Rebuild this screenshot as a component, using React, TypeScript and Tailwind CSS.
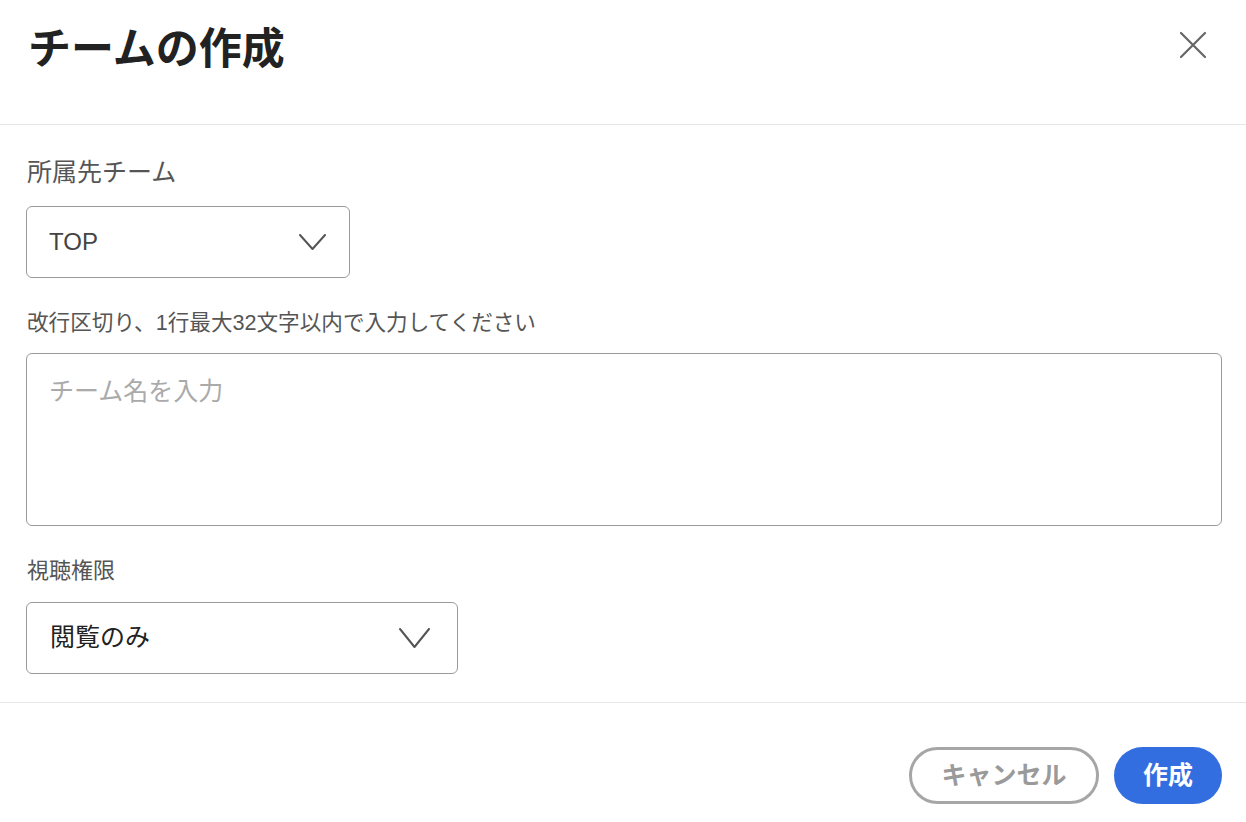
import React from "react";

const FONT = { fontFamily: '"Liberation Sans", "Noto Sans CJK JP", sans-serif' };

function Chevron({ w, h }: { w: number; h: number }) {
  return (
    <svg width={w} height={h} viewBox={`0 0 ${w} ${h}`} fill="none">
      <path d={`M1 1 L${w / 2} ${h - 1} L${w - 1} 1`} stroke="#555" strokeWidth="2" strokeLinecap="round" strokeLinejoin="round" />
    </svg>
  );
}

export default function App() {
  return (
    <div className="w-[1246px] h-[822px] bg-white flex flex-col overflow-hidden" style={FONT}>
      <header className="h-[125px] border-b border-[#e6e6e6] flex items-start justify-between pl-[28px] pr-[38px] pt-[17px] shrink-0">
        <h1 className="text-[43px] leading-[64px] font-bold text-[#222]">チームの作成</h1>
        <button className="mt-[13px] w-[30px] h-[30px] flex items-center justify-center">
          <svg width="28" height="28" viewBox="0 0 28 28" fill="none">
            <path d="M2 2 L26 26 M26 2 L2 26" stroke="#666" strokeWidth="2.2" strokeLinecap="round" />
          </svg>
        </button>
      </header>

      <main className="flex flex-col pl-[26px] pr-[24px] pt-[31px] pb-[28px] border-b border-[#e6e6e6] shrink-0">
        <label className="text-[25px] leading-[32px] text-[#555] pl-[1px]">所属先チーム</label>
        <div className="mt-[18px] w-[324px] h-[72px] border border-[#9a9a9a] rounded-[6px] flex items-center justify-between pl-[22px] pr-[23px]">
          <span className="text-[24px] text-[#444]">TOP</span>
          <Chevron w={27} h={16} />
        </div>

        <label className="mt-[30px] text-[21.6px] leading-[30px] text-[#555] pl-[1px]">改行区切り、1行最大32文字以内で入力してください</label>
        <div className="mt-[15px] w-full h-[173px] border border-[#9a9a9a] rounded-[6px] px-[22px] pt-[20px]">
          <span className="text-[25px] leading-[34px] text-[#aaa]">チーム名を入力</span>
        </div>

        <label className="mt-[30px] text-[22px] leading-[30px] text-[#555] pl-[1px]">視聴権限</label>
        <div className="mt-[16px] w-[432px] h-[72px] border border-[#9a9a9a] rounded-[6px] flex items-center justify-between pl-[23px] pr-[27px]">
          <span className="text-[25px] text-[#222]">閲覧のみ</span>
          <Chevron w={31} h={20} />
        </div>
      </main>

      <footer className="flex justify-end gap-[15px] pr-[24px] pt-[44px]">
        <button className="w-[190px] h-[57px] rounded-full border-[3px] border-[#a6a6a6] text-[25px] font-bold text-[#9a9a9a] flex items-center justify-center">
          キャンセル
        </button>
        <button className="w-[108px] h-[57px] rounded-full bg-[#336ee0] text-[25px] font-bold text-white flex items-center justify-center">
          作成
        </button>
      </footer>
    </div>
  );
}
